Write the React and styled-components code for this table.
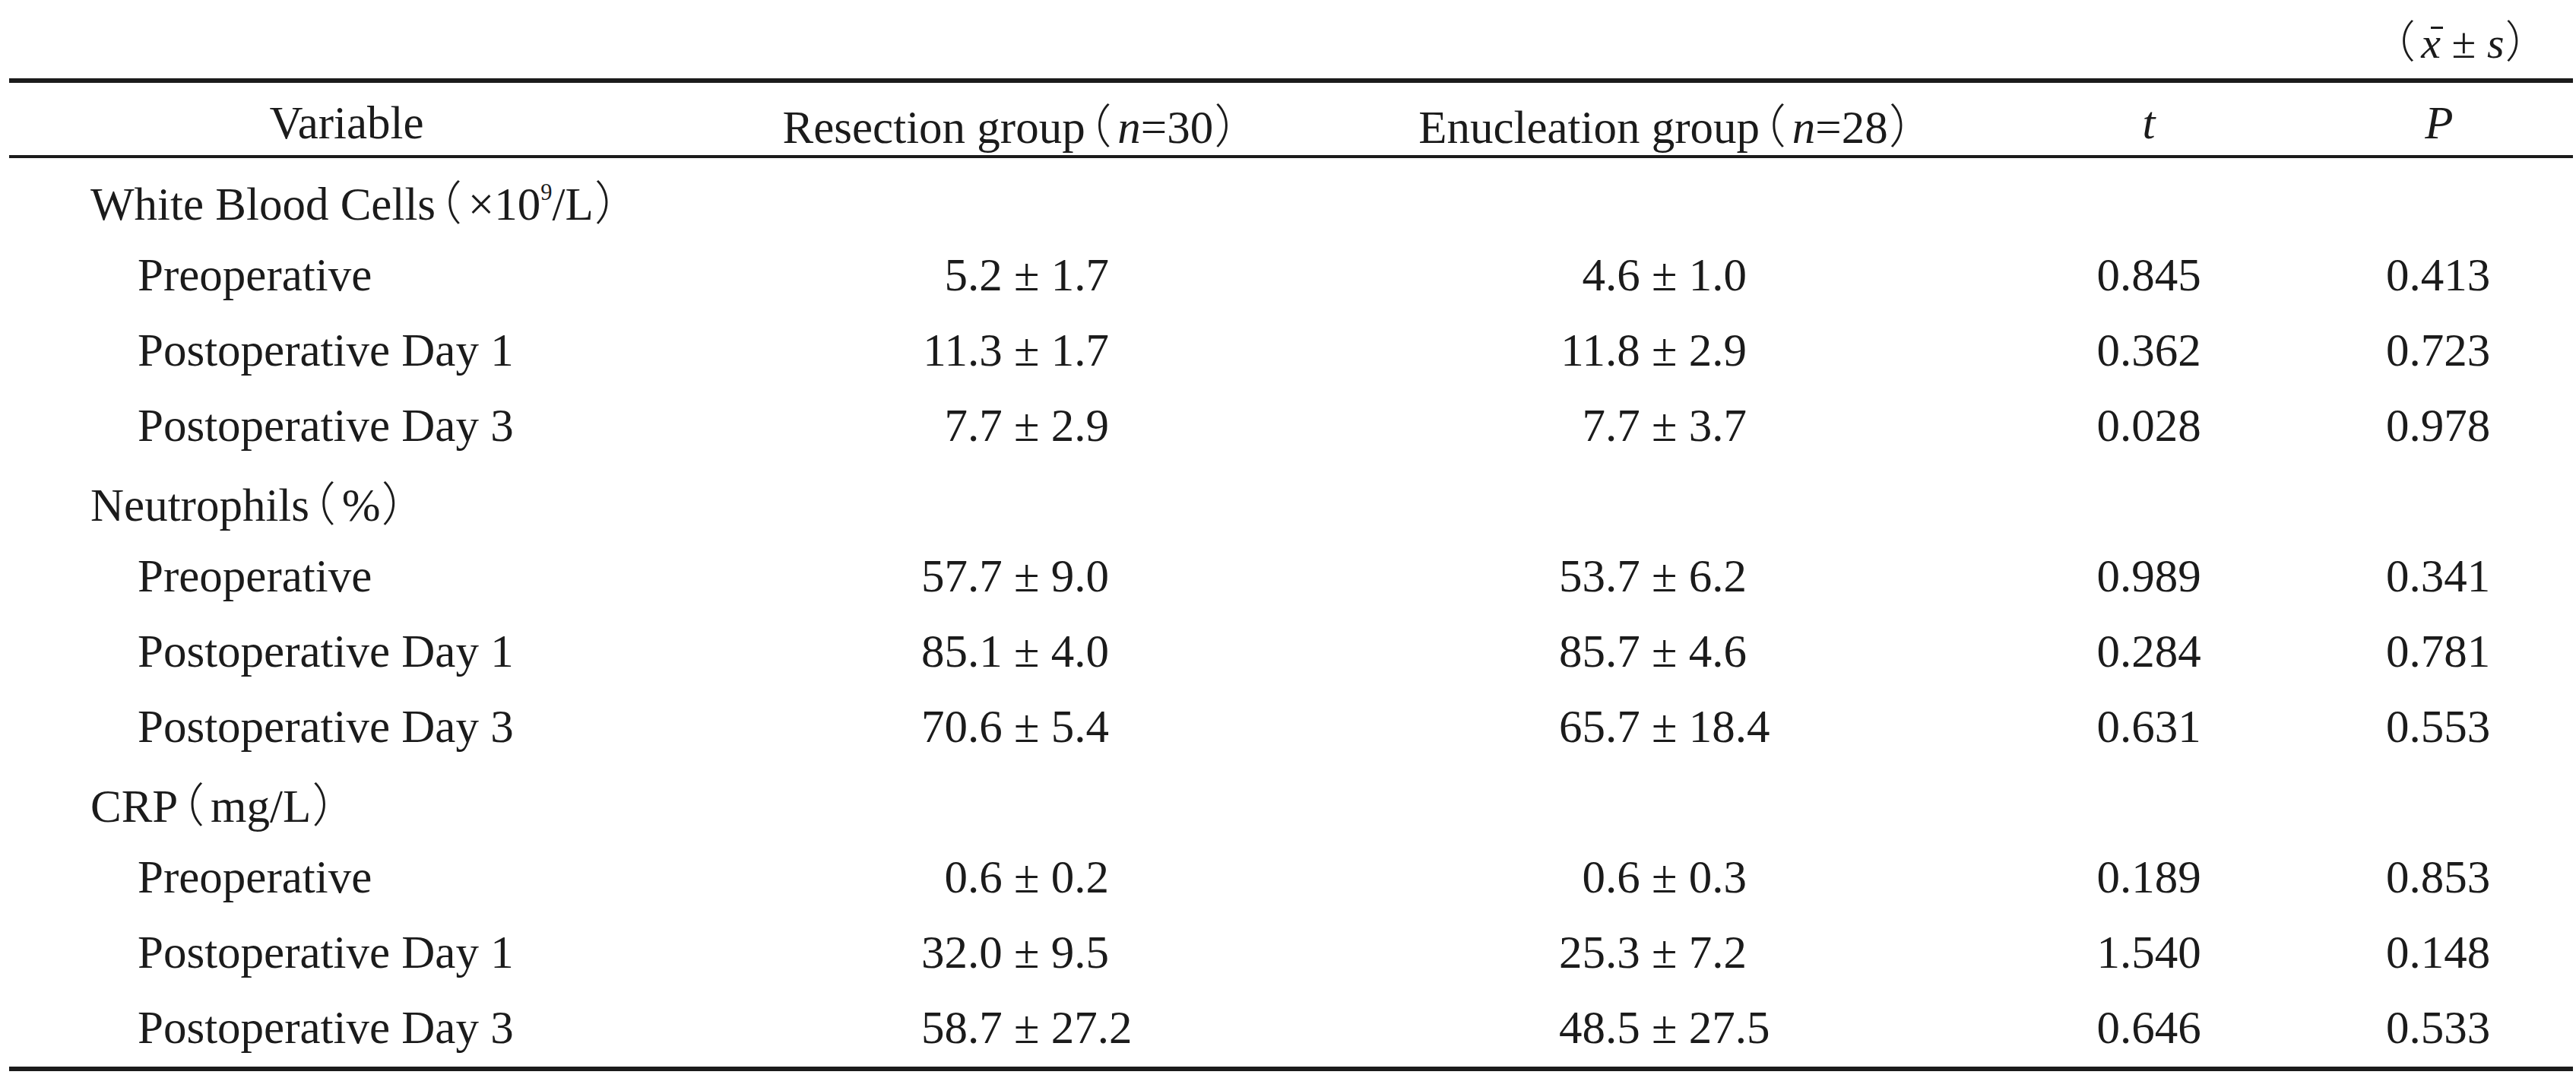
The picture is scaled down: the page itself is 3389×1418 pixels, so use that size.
import styled, { createGlobalStyle } from 'styled-components';

const GlobalStyle = createGlobalStyle`
  html, body {
    margin: 0;
    padding: 0;
    background: #ffffff;
  }
  body {
    font-family: 'Liberation Serif', 'Noto Sans CJK SC', serif;
    color: #1b1b1b;
  }
`;

const COLS = '888px 846px 892px 378px 369px';

const Sheet = styled.div`
  width: 3373px;
  margin-left: 12px;
  font-size: 61px;
`;

const Caption = styled.div`
  display: flex;
  justify-content: flex-end;
  align-items: baseline;
  height: 103px;
  box-sizing: border-box;
  padding: 20px 58px 0 0;
  font-size: 58px;
  line-height: 62px;
  white-space: pre;
`;

const Rule = styled.div`
  height: ${({ thick }) => thick}px;
  background: #1b1b1b;
`;

const HeadRow = styled.div`
  display: grid;
  grid-template-columns: ${COLS};
  height: 95px;
  box-sizing: border-box;
  padding-top: 10px;
  line-height: 85px;
`;

const HeadCell = styled.div`
  text-align: center;
  white-space: nowrap;
  padding-left: ${({ shift = 0 }) => shift}px;
`;

const Body = styled.div`
  padding: 5px 0 2px;
`;

const Row = styled.div`
  display: grid;
  grid-template-columns: ${COLS};
  height: 99px;
  line-height: 99px;
  white-space: nowrap;
`;

const Label = styled.div`
  padding-left: ${({ indent }) => (indent ? 169 : 107)}px;
`;

const ValueCell = styled.div`
  padding-left: ${({ lead }) => lead}px;
`;

const Mean = styled.span`
  display: inline-block;
  min-width: 1.75em;
  text-align: right;
`;

const StatCell = styled.div`
  text-align: center;
  padding-left: ${({ shift = 0 }) => shift}px;
`;

// full-width brackets: the CJK glyph sits off-centre in its em box, so pull the box in
const Paren = styled.span`
  font-family: 'Noto Sans CJK SC', sans-serif;
  font-weight: 300;
  margin: ${({ open }) => (open ? '0 0.13em 0 -0.43em' : '0 -0.46em 0 0.02em')};
`;

const Ital = styled.i`
  font-style: italic;
`;

const Sup = styled.sup`
  font-size: 0.5em;
  line-height: 0;
  vertical-align: 0.85em;
`;

const Bar = styled.span`
  position: relative;
  font-style: italic;

  &::before {
    content: '';
    position: absolute;
    left: 13px;
    right: -3px;
    top: 9px;
    height: 3px;
    background: #1b1b1b;
  }
`;

const groups = [
  {
    label: (
      <>
        White Blood Cells<Paren open>（</Paren>×10<Sup>9</Sup>/L<Paren>）</Paren>
      </>
    ),
    rows: [
      ['Preoperative', '5.2', '1.7', '4.6', '1.0', '0.845', '0.413'],
      ['Postoperative Day 1', '11.3', '1.7', '11.8', '2.9', '0.362', '0.723'],
      ['Postoperative Day 3', '7.7', '2.9', '7.7', '3.7', '0.028', '0.978'],
    ],
  },
  {
    label: (
      <>
        Neutrophils<Paren open>（</Paren>%<Paren>）</Paren>
      </>
    ),
    rows: [
      ['Preoperative', '57.7', '9.0', '53.7', '6.2', '0.989', '0.341'],
      ['Postoperative Day 1', '85.1', '4.0', '85.7', '4.6', '0.284', '0.781'],
      ['Postoperative Day 3', '70.6', '5.4', '65.7', '18.4', '0.631', '0.553'],
    ],
  },
  {
    label: (
      <>
        CRP<Paren open>（</Paren>mg/L<Paren>）</Paren>
      </>
    ),
    rows: [
      ['Preoperative', '0.6', '0.2', '0.6', '0.3', '0.189', '0.853'],
      ['Postoperative Day 1', '32.0', '9.5', '25.3', '7.2', '1.540', '0.148'],
      ['Postoperative Day 3', '58.7', '27.2', '48.5', '27.5', '0.646', '0.533'],
    ],
  },
];

const MeanSd = ({ mean, sd, lead }) => (
  <ValueCell lead={lead}>
    <Mean>{mean}</Mean> ± {sd}
  </ValueCell>
);

export default function App() {
  return (
    <>
      <GlobalStyle />
      <Sheet>
        <Caption>
          <Paren open>（</Paren>
          <Bar>x</Bar>
          {' ± '}
          <Ital>s</Ital>
          <Paren>）</Paren>
        </Caption>
        <Rule thick={6} />
        <HeadRow>
          <HeadCell>Variable</HeadCell>
          <HeadCell shift={14}>
            Resection group<Paren open>（</Paren><Ital>n</Ital>=30<Paren>）</Paren>
          </HeadCell>
          <HeadCell>
            Enucleation group<Paren open>（</Paren><Ital>n</Ital>=28<Paren>）</Paren>
          </HeadCell>
          <HeadCell><Ital>t</Ital></HeadCell>
          <HeadCell shift={17}><Ital>P</Ital></HeadCell>
        </HeadRow>
        <Rule thick={4} />
        <Body>
          {groups.map((g, gi) => (
            <div key={gi}>
              <Row>
                <Label>{g.label}</Label>
              </Row>
              {g.rows.map((r) => (
                <Row key={r[0]}>
                  <Label indent>{r[0]}</Label>
                  <MeanSd mean={r[1]} sd={r[2]} lead={312} />
                  <MeanSd mean={r[3]} sd={r[4]} lead={305} />
                  <StatCell>{r[5]}</StatCell>
                  <StatCell shift={14}>{r[6]}</StatCell>
                </Row>
              ))}
            </div>
          ))}
        </Body>
        <Rule thick={6} />
      </Sheet>
    </>
  );
}
